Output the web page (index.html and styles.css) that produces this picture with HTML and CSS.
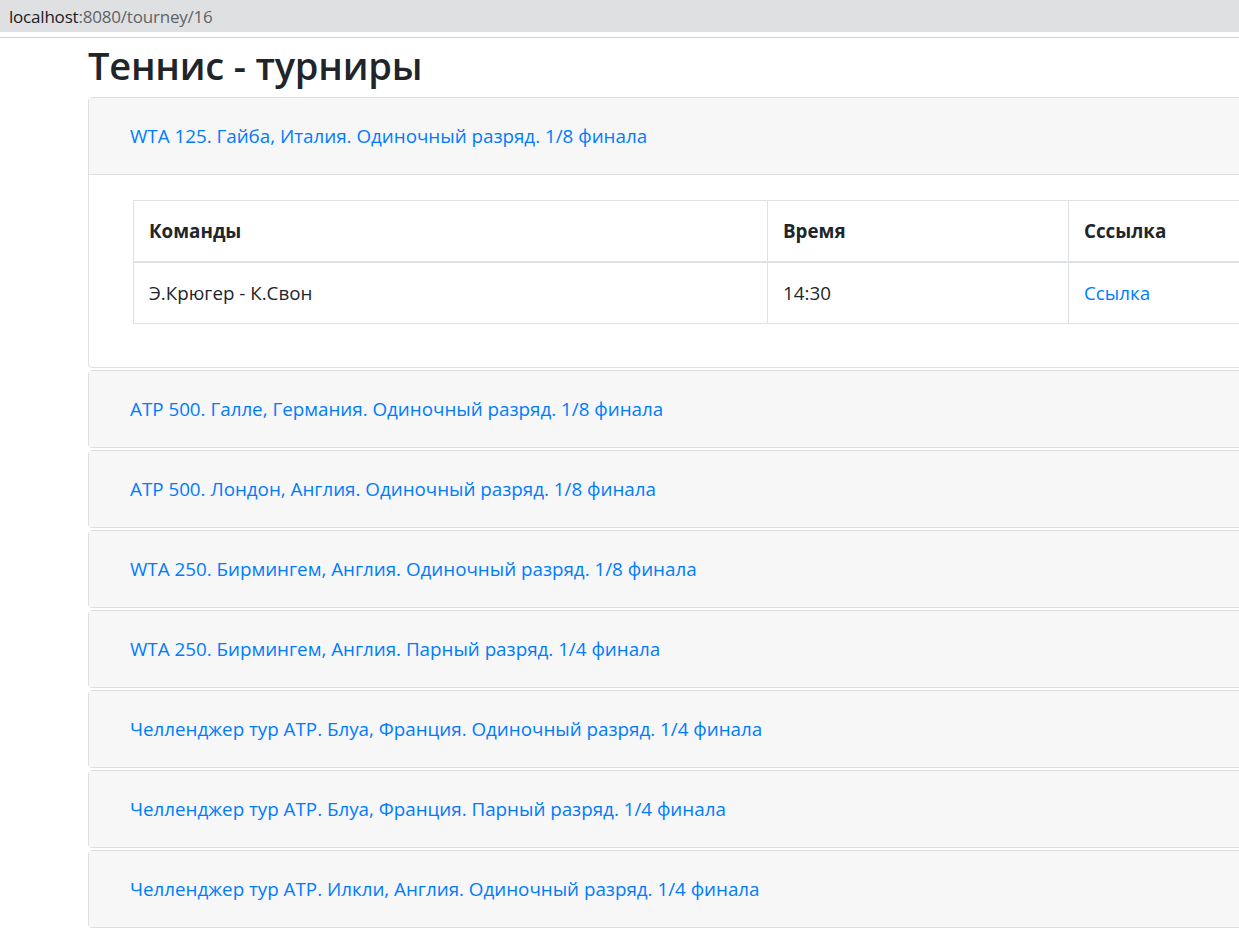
FILE: index.html
```html
<!DOCTYPE html>
<html lang="ru">
<head>
<meta charset="utf-8">
<title>Теннис - турниры</title>
<link rel="stylesheet" href="styles.css">
</head>
<body>
<div class="browser">
  <div class="addressbar"><span class="host">localhost</span><span class="path">:8080/tourney/16</span></div>
</div>
<div class="page">
  <h2 class="title">Теннис - турниры</h2>
  <div class="accordion">
    <div class="card">
      <div class="card-header"><a class="btn-link" href="#">WTA 125. Гайба, Италия. Одиночный разряд. 1/8 финала</a></div>
      <div class="card-body">
        <table class="table">
          <colgroup><col class="c1"><col class="c2"><col class="c3"></colgroup>
          <thead><tr><th>Команды</th><th>Время</th><th>Сссылка</th></tr></thead>
          <tbody><tr><td>Э.Крюгер - К.Свон</td><td>14:30</td><td><a class="link" href="#">Ссылка</a></td></tr></tbody>
        </table>
      </div>
    </div>
    <div class="card collapsed">
      <div class="card-header"><a class="btn-link" href="#">ATP 500. Галле, Германия. Одиночный разряд. 1/8 финала</a></div>
    </div>
    <div class="card collapsed">
      <div class="card-header"><a class="btn-link" href="#">ATP 500. Лондон, Англия. Одиночный разряд. 1/8 финала</a></div>
    </div>
    <div class="card collapsed">
      <div class="card-header"><a class="btn-link" href="#">WTA 250. Бирмингем, Англия. Одиночный разряд. 1/8 финала</a></div>
    </div>
    <div class="card collapsed">
      <div class="card-header"><a class="btn-link" href="#">WTA 250. Бирмингем, Англия. Парный разряд. 1/4 финала</a></div>
    </div>
    <div class="card collapsed">
      <div class="card-header"><a class="btn-link" href="#">Челленджер тур ATP. Блуа, Франция. Одиночный разряд. 1/4 финала</a></div>
    </div>
    <div class="card collapsed">
      <div class="card-header"><a class="btn-link" href="#">Челленджер тур ATP. Блуа, Франция. Парный разряд. 1/4 финала</a></div>
    </div>
    <div class="card collapsed">
      <div class="card-header"><a class="btn-link" href="#">Челленджер тур ATP. Илкли, Англия. Одиночный разряд. 1/4 финала</a></div>
    </div>
  </div>
</div>
</body>
</html>
```

FILE: styles.css
```css
html, body {
  margin: 0;
  padding: 0;
  background: #ffffff;
  overflow: hidden;
}
body {
  font-family: "Open Sans", "Noto Sans", "Liberation Sans", sans-serif;
  color: #212529;
  width: 1239px;
  height: 929px;
}
.browser {
  height: 37px;
  border-bottom: 1px solid #d4d4d4;
}
.addressbar {
  height: 32px;
  background: #dfe0e2;
  display: flex;
  align-items: center;
  padding-left: 9px;
  font-size: 17px;
  letter-spacing: -0.2px;
}
.addressbar .host { color: #202124; }
.addressbar .path { color: #5f6368; }
.page {
  padding-top: 4px;
  padding-left: 88px;
  width: 1260px;
}
.title {
  margin: 0 0 9px 0;
  font-size: 38px;
  line-height: 46px;
  font-weight: 600;
  color: #212529;
  letter-spacing: -0.2px;
}
.accordion {
  display: flex;
  flex-direction: column;
  gap: 2px;
}
.card {
  border: 1px solid #dfdfdf;
  border-radius: 4px 0 0 4px;
  background: #ffffff;
}
.card-header {
  height: 76px;
  background: #f7f7f7;
  display: flex;
  align-items: center;
  padding-left: 41px;
}
.card:not(.collapsed) .card-header {
  border-bottom: 1px solid #dfdfdf;
}
.btn-link, .link {
  color: #007bff;
  text-decoration: none;
  font-size: 18.8px;
}
.card-body {
  padding: 25px 44px 24px 44px;
  height: 143px;
}
.table {
  border-collapse: collapse;
  table-layout: fixed;
  width: 1170px;
  font-size: 18.8px;
}
.c1 { width: 634px; }
.c2 { width: 301px; }
.c3 { width: 235px; }
.table th, .table td {
  border: 1px solid #dee2e6;
  padding: 15px 15px;
  line-height: 30px;
  text-align: left;
}
.table th {
  font-weight: 700;
  border-bottom: 2px solid #dee2e6;
}
```
